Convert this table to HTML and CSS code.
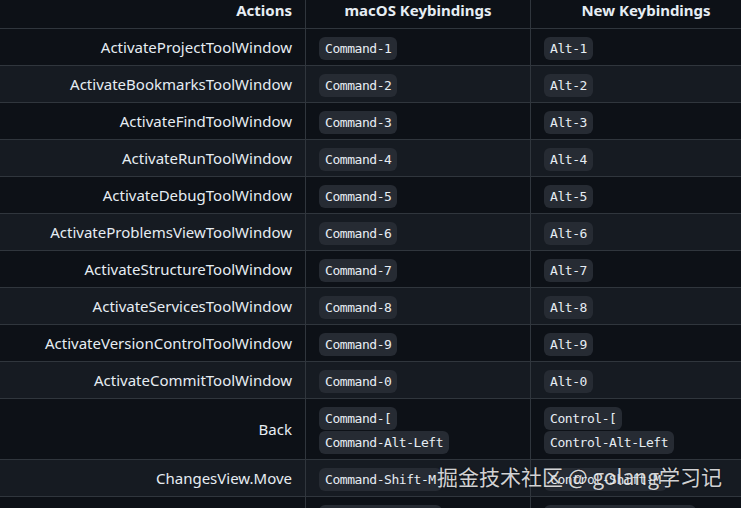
FILE: index.html
```html
<!DOCTYPE html>
<html lang="en">
<head>
<meta charset="utf-8">
<title>Keybindings</title>
<link rel="stylesheet" href="styles.css">
</head>
<body>
<div class="page">
  <table class="keys">
    <colgroup>
      <col class="c1"><col class="c2"><col class="c3">
    </colgroup>
    <thead>
      <tr><th class="r">Actions</th><th>macOS Keybindings</th><th>New Keybindings</th></tr>
    </thead>
    <tbody>
      <tr><td class="r">ActivateProjectToolWindow</td><td><code>Command-1</code></td><td><code>Alt-1</code></td></tr>
      <tr><td class="r">ActivateBookmarksToolWindow</td><td><code>Command-2</code></td><td><code>Alt-2</code></td></tr>
      <tr><td class="r">ActivateFindToolWindow</td><td><code>Command-3</code></td><td><code>Alt-3</code></td></tr>
      <tr><td class="r">ActivateRunToolWindow</td><td><code>Command-4</code></td><td><code>Alt-4</code></td></tr>
      <tr><td class="r">ActivateDebugToolWindow</td><td><code>Command-5</code></td><td><code>Alt-5</code></td></tr>
      <tr><td class="r">ActivateProblemsViewToolWindow</td><td><code>Command-6</code></td><td><code>Alt-6</code></td></tr>
      <tr><td class="r">ActivateStructureToolWindow</td><td><code>Command-7</code></td><td><code>Alt-7</code></td></tr>
      <tr><td class="r">ActivateServicesToolWindow</td><td><code>Command-8</code></td><td><code>Alt-8</code></td></tr>
      <tr><td class="r">ActivateVersionControlToolWindow</td><td><code>Command-9</code></td><td><code>Alt-9</code></td></tr>
      <tr><td class="r">ActivateCommitToolWindow</td><td><code>Command-0</code></td><td><code>Alt-0</code></td></tr>
      <tr><td class="r">Back</td><td><code>Command-[</code><br><code>Command-Alt-Left</code></td><td><code>Control-[</code><br><code>Control-Alt-Left</code></td></tr>
      <tr><td class="r">ChangesView.Move</td><td><code>Command-Shift-M</code></td><td><code>Control-Shift-M</code></td></tr>
      <tr><td class="r">ChangesView.Shelve</td><td><code>Command-Shift-H</code></td><td><code>Control-Shift-Alt-H</code></td></tr>
    </tbody>
  </table>
  <div class="watermark">掘金技术社区 @ golang学习记</div>
</div>
</body>
</html>
```

FILE: styles.css
```css
html, body {
  margin: 0;
  padding: 0;
  background: #0d1117;
  overflow: hidden;
}
body {
  font-family: "Noto Sans", "Open Sans", sans-serif;
  font-size: 15px;
  line-height: 24px;
  color: #e6edf3;
}
.page {
  position: relative;
  width: 741px;
  height: 508px;
  overflow: hidden;
}
.keys {
  border-collapse: collapse;
  table-layout: fixed;
  width: 762px;
  margin: -9px 0 0 -1px;
}
.c1 { width: 306px; }
.c2 { width: 225px; }
.c3 { width: 231px; }
.keys th, .keys td {
  border: 1px solid #30363d;
  padding: 6px 13px;
  height: 24px;
  text-align: left;
  white-space: nowrap;
}
.keys th {
  font-weight: 700;
  text-align: center;
}
.keys .r { text-align: right; }
.keys tbody tr:nth-child(odd) { background: #0d1117; }
.keys tbody tr:nth-child(even) { background: #161b22; }
code {
  font-family: "DejaVu Sans Mono", "Liberation Mono", monospace;
  font-size: 13px;
  letter-spacing: -0.45px;
  line-height: 14px;
  padding: 4px 6px;
  border-radius: 6px;
  background: #262b33;
  color: #e6edf3;
}
.watermark {
  position: absolute;
  left: 437px;
  top: 461px;
  font-family: "Noto Sans CJK SC", "Noto Sans", sans-serif;
  font-size: 21px;
  line-height: 30px;
  color: rgba(255, 255, 255, 0.82);
  text-shadow: 0 0 2px rgba(0, 0, 0, 0.4);
  white-space: nowrap;
}
```
